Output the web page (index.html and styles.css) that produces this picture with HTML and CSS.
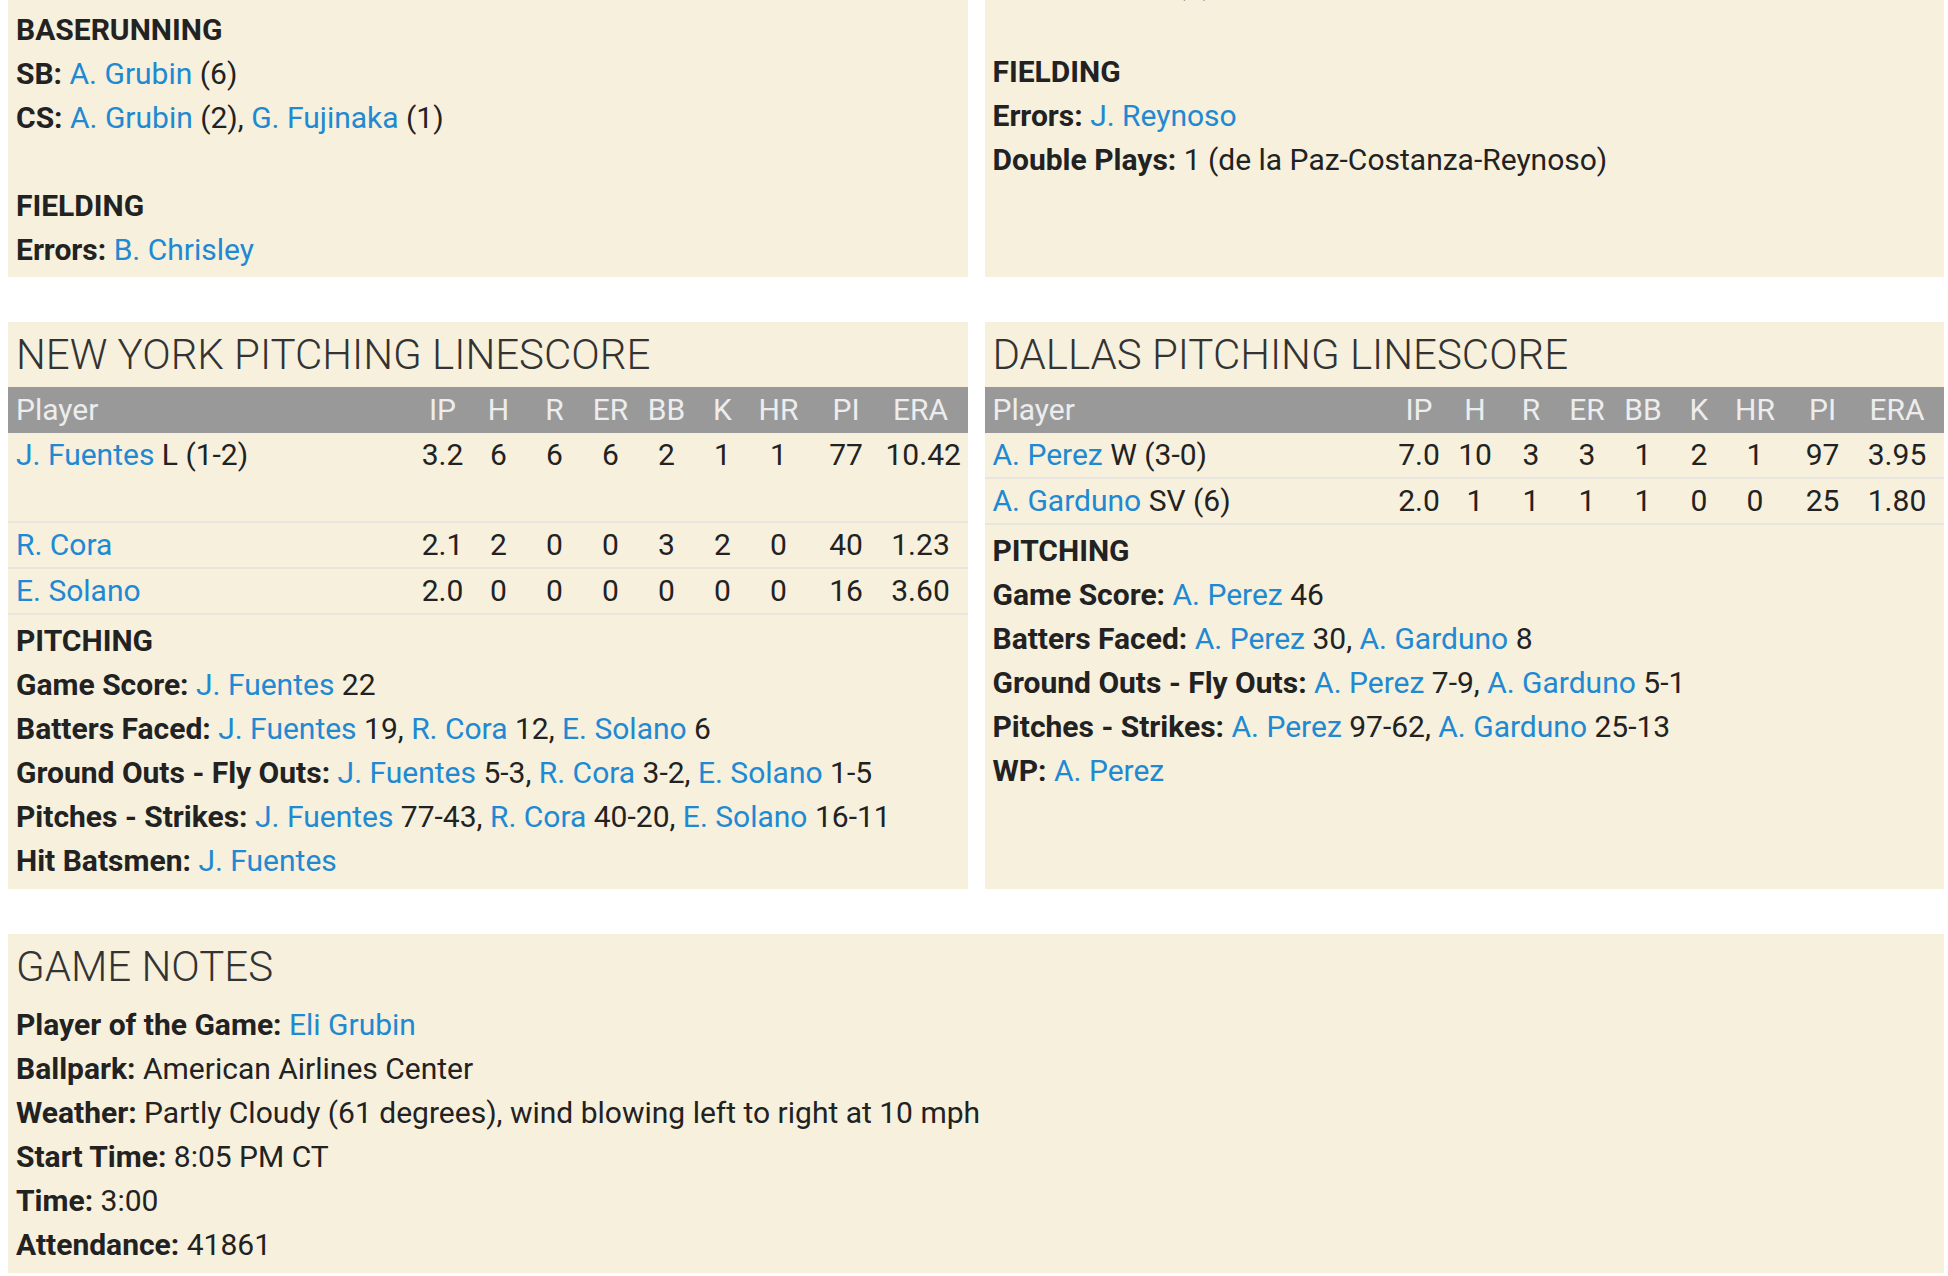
FILE: index.html
```html
<!DOCTYPE html>
<html lang="en">
<head>
<meta charset="utf-8">
<title>Box Score</title>
<link rel="stylesheet" href="styles.css">
</head>
<body>
<div class="page">
  <div class="row row-top">
    <section class="panel">
      <div class="lines lines-top lines-offset">
        <div class="head">BASERUNNING</div>
        <div class="line"><b>SB:</b> <a href="#">A. Grubin</a> (6)</div>
        <div class="line"><b>CS:</b> <a href="#">A. Grubin</a> (2), <a href="#">G. Fujinaka</a> (1)</div>
        <div class="spacer"></div>
        <div class="head">FIELDING</div>
        <div class="line"><b>Errors:</b> <a href="#">B. Chrisley</a></div>
      </div>
    </section>
    <section class="panel">
      <div class="lines lines-top">
        <div class="line"><b>SB:</b> <a href="#">R. Castro</a> (1)</div>
        <div class="spacer"></div>
        <div class="head">FIELDING</div>
        <div class="line"><b>Errors:</b> <a href="#">J. Reynoso</a></div>
        <div class="line"><b>Double Plays:</b> 1 (de la Paz-Costanza-Reynoso)</div>
      </div>
    </section>
  </div>

  <div class="row">
    <section class="panel">
      <h2 class="title">NEW YORK PITCHING LINESCORE</h2>
      <table class="linescore">
        <colgroup>
          <col>
          <col class="c-num"><col class="c-num"><col class="c-num"><col class="c-num">
          <col class="c-num"><col class="c-num"><col class="c-num">
          <col class="c-pi"><col class="c-era">
        </colgroup>
        <thead>
          <tr><th class="player">Player</th><th>IP</th><th>H</th><th>R</th><th>ER</th><th>BB</th><th>K</th><th>HR</th><th>PI</th><th class="era">ERA</th></tr>
        </thead>
        <tbody>
          <tr class="tall"><td class="player"><a href="#">J. Fuentes</a> L (1-2)</td><td>3.2</td><td>6</td><td>6</td><td>6</td><td>2</td><td>1</td><td>1</td><td>77</td><td class="era">10.42</td></tr>
          <tr><td class="player"><a href="#">R. Cora</a></td><td>2.1</td><td>2</td><td>0</td><td>0</td><td>3</td><td>2</td><td>0</td><td>40</td><td class="era">1.23</td></tr>
          <tr><td class="player"><a href="#">E. Solano</a></td><td>2.0</td><td>0</td><td>0</td><td>0</td><td>0</td><td>0</td><td>0</td><td>16</td><td class="era">3.60</td></tr>
        </tbody>
      </table>
      <div class="lines">
        <div class="head">PITCHING</div>
        <div class="line"><b>Game Score:</b> <a href="#">J. Fuentes</a> 22</div>
        <div class="line"><b>Batters Faced:</b> <a href="#">J. Fuentes</a> 19, <a href="#">R. Cora</a> 12, <a href="#">E. Solano</a> 6</div>
        <div class="line"><b>Ground Outs - Fly Outs:</b> <a href="#">J. Fuentes</a> 5-3, <a href="#">R. Cora</a> 3-2, <a href="#">E. Solano</a> 1-5</div>
        <div class="line"><b>Pitches - Strikes:</b> <a href="#">J. Fuentes</a> 77-43, <a href="#">R. Cora</a> 40-20, <a href="#">E. Solano</a> 16-11</div>
        <div class="line"><b>Hit Batsmen:</b> <a href="#">J. Fuentes</a></div>
      </div>
    </section>
    <section class="panel">
      <h2 class="title">DALLAS PITCHING LINESCORE</h2>
      <table class="linescore">
        <colgroup>
          <col>
          <col class="c-num"><col class="c-num"><col class="c-num"><col class="c-num">
          <col class="c-num"><col class="c-num"><col class="c-num">
          <col class="c-pi"><col class="c-era">
        </colgroup>
        <thead>
          <tr><th class="player">Player</th><th>IP</th><th>H</th><th>R</th><th>ER</th><th>BB</th><th>K</th><th>HR</th><th>PI</th><th class="era">ERA</th></tr>
        </thead>
        <tbody>
          <tr><td class="player"><a href="#">A. Perez</a> W (3-0)</td><td>7.0</td><td>10</td><td>3</td><td>3</td><td>1</td><td>2</td><td>1</td><td>97</td><td class="era">3.95</td></tr>
          <tr><td class="player"><a href="#">A. Garduno</a> SV (6)</td><td>2.0</td><td>1</td><td>1</td><td>1</td><td>1</td><td>0</td><td>0</td><td>25</td><td class="era">1.80</td></tr>
        </tbody>
      </table>
      <div class="lines">
        <div class="head">PITCHING</div>
        <div class="line"><b>Game Score:</b> <a href="#">A. Perez</a> 46</div>
        <div class="line"><b>Batters Faced:</b> <a href="#">A. Perez</a> 30, <a href="#">A. Garduno</a> 8</div>
        <div class="line"><b>Ground Outs - Fly Outs:</b> <a href="#">A. Perez</a> 7-9, <a href="#">A. Garduno</a> 5-1</div>
        <div class="line"><b>Pitches - Strikes:</b> <a href="#">A. Perez</a> 97-62, <a href="#">A. Garduno</a> 25-13</div>
        <div class="line"><b>WP:</b> <a href="#">A. Perez</a></div>
      </div>
    </section>
  </div>

  <section class="panel">
    <h2 class="title">GAME NOTES</h2>
    <div class="lines">
      <div class="line"><b>Player of the Game:</b> <a href="#">Eli Grubin</a></div>
      <div class="line"><b>Ballpark:</b> American Airlines Center</div>
      <div class="line"><b>Weather:</b> Partly Cloudy (61 degrees), wind blowing left to right at 10 mph</div>
      <div class="line"><b>Start Time:</b> 8:05 PM CT</div>
      <div class="line"><b>Time:</b> 3:00</div>
      <div class="line"><b>Attendance:</b> 41861</div>
    </div>
  </section>
</div>
</body>
</html>
```

FILE: styles.css
```css
html, body {
  margin: 0;
  padding: 0;
  background: #ffffff;
}

body {
  font-family: Roboto, "Noto Sans", "Liberation Sans", sans-serif;
  font-size: 30px;
  color: #222222;
  overflow: hidden;
}

.page {
  padding: 0 4px 0 8px;
  display: flex;
  flex-direction: column;
  gap: 45px;
}

.row {
  display: grid;
  grid-template-columns: 1fr 1fr;
  column-gap: 17px;
}

.row-top {
  margin-top: -38px;
}

.panel {
  background: #f6f0dd;
}

a {
  color: #2189d2;
  text-decoration: none;
}

b {
  font-weight: 700;
}

.title {
  margin: 0;
  padding: 0 8px;
  font-size: 42px;
  font-weight: 300;
  line-height: 65px;
  color: #333333;
}

.lines {
  padding: 4px 8px 6px;
  line-height: 44px;
}

.lines-top {
  padding-top: 0;
  padding-bottom: 5px;
}

.lines-offset {
  padding-top: 46px;
}

.head {
  font-weight: 700;
  height: 44px;
}

.line {
  height: 44px;
  white-space: nowrap;
}

.spacer {
  height: 44px;
}

.linescore {
  width: 100%;
  border-collapse: collapse;
  table-layout: fixed;
}

.linescore .c-num {
  width: 56px;
}

.linescore .c-pi {
  width: 79px;
}

.linescore .c-era {
  width: 82px;
}

.linescore th {
  background: #999999;
  color: #ededed;
  font-weight: 400;
  height: 46px;
  line-height: 46px;
  padding: 0;
  text-align: center;
}

.linescore td {
  height: 44px;
  line-height: 44px;
  padding: 0;
  text-align: center;
  white-space: nowrap;
  border-bottom: 2px solid #e8e5de;
}

.linescore .player {
  text-align: left;
  padding-left: 8px;
}

.linescore .era {
  padding-right: 12px;
}

.linescore tr.tall td {
  height: 88px;
  vertical-align: top;
}
```
